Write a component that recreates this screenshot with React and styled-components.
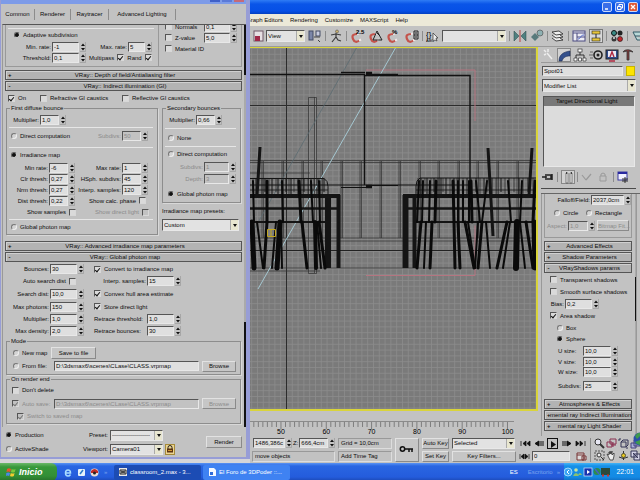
import styled, { createGlobalStyle, css } from 'styled-components';

const GlobalStyle = createGlobalStyle`
  * {
    box-sizing: border-box;
  }
  body {
    margin: 0;
    background: #c2c2c2;
  }
  body, button, input, select {
    font-family: 'Liberation Sans', sans-serif;
    font-size: 6px;
    line-height: 8px;
    color: #0c0c0c;
  }
`;

const sunken = css`
  border: 1px solid;
  border-color: #555 #e8e8e8 #e8e8e8 #555;
`;
const raised = css`
  border: 1px solid;
  border-color: #e2e2e2 #8a8a8a #8a8a8a #e2e2e2;
`;

/* shared controls */

const Line = styled.div`
  display: flex;
  align-items: center;
  flex: none;
  height: ${p => p.$h || 11}px;
  padding-left: ${p => p.$pl || 0}px;
  gap: ${p => p.$gap || 0}px;
  white-space: nowrap;
`;
const Rule = styled.hr`
  flex: none;
  height: 1px;
  margin: ${p => p.$mt || 0}px 4px 0 2px;
  border: 0;
  background: #e6e6e6;
`;
const PanelRule = styled.hr`
  flex: none;
  height: 1px;
  margin: 0 4px 0 0;
  border: 0;
  background: #4a4a4a;
`;
const Spring = styled.span`
  flex: 1;
`;
const TickLabel = styled.label`
  display: flex;
  flex: none;
  align-items: center;
  flex-direction: ${p => (p.$after ? 'row-reverse' : 'row')};
  gap: 3px;
  width: ${p => (p.$w ? p.$w + 'px' : 'auto')};
  white-space: nowrap;
  color: ${p => (p.$dim ? '#8b8b8b' : '#0c0c0c')};
`;
const CheckBox = styled.input`
  appearance: none;
  display: flex;
  justify-content: center;
  flex: none;
  width: 7px;
  height: 7px;
  margin: 0;
  border: 1px solid;
  border-color: #555 #d8d8d8 #d8d8d8 #555;
  background: ${p => (p.disabled ? '#c2c2c2' : '#dadada')};
  &:checked::after {
    content: '';
    width: 2px;
    height: 4px;
    border: solid ${p => (p.disabled ? '#777' : '#111')};
    border-width: 0 1px 1px 0;
    transform: rotate(40deg);
  }
`;
const RadioDot = styled.input`
  appearance: none;
  flex: none;
  width: 6px;
  height: 6px;
  margin: 0;
  border: 1px solid;
  border-color: #777 #eee #eee #777;
  border-radius: 50%;
  background: #d4d4d4;
  &:checked {
    background: #111;
    border-color: #666 #ccc #ccc #666;
  }
`;
const FieldLabel = styled.label`
  display: flex;
  flex: none;
  align-items: center;
  gap: 1px;
  white-space: nowrap;
  color: ${p => (p.$dim ? '#8b8b8b' : '#0c0c0c')};
`;
const Caption = styled.span`
  width: ${p => (p.$w ? p.$w + 'px' : 'auto')};
  text-align: ${p => p.$align || 'right'};
`;
const TextBox = styled.input`
  ${sunken}
  flex: ${p => (p.$w ? 'none' : '1')};
  width: ${p => (p.$w ? p.$w + 'px' : '0')};
  height: 10px;
  padding: 0 0 0 1px;
  border-radius: 0;
  background: ${p => (p.disabled ? '#c2c2c2' : '#dfdfdf')};
  color: ${p => (p.disabled ? '#8b8b8b' : '#0c0c0c')};
`;
const PushButton = styled.button`
  ${raised}
  flex: none;
  width: ${p => p.$w}px;
  height: ${p => p.$h || 11}px;
  padding: 0;
  background: #c6c6c6;
  text-align: center;
  white-space: nowrap;
  &:disabled {
    color: #8b8b8b;
  }
`;
const SelectFrame = styled.span`
  ${sunken}
  position: relative;
  display: flex;
  flex: none;
  width: ${p => (p.$w ? p.$w + 'px' : 'auto')};
  height: ${p => p.$h || 11}px;
  background: #e2e2e2;
`;
const SelectBox = styled.select`
  appearance: none;
  width: 100%;
  padding: 0 0 0 1px;
  border: 0;
  border-radius: 0;
  background: transparent;
`;
const DropArrow = styled.span`
  position: absolute;
  top: 0;
  right: 0;
  bottom: 0;
  width: 8px;
  display: grid;
  place-items: center;
  background: #e8e6d0;
  border-left: 1px solid #aaa;
  pointer-events: none;
  &::after {
    content: '';
    border: solid transparent;
    border-width: 3px 2px 0;
    border-top-color: #111;
  }
`;
const Group = styled.fieldset`
  min-width: 0;
  margin: 0;
  padding: 0 0 ${p => p.$pb || 0}px;
  border: 1px solid #8d8d8d;
  box-shadow: 1px 1px 0 #d8d8d8;
`;
const GroupTitle = styled.legend`
  height: 8px;
  margin-left: 3px;
  padding: 0 1px;
`;
const RolloutButton = styled.button`
  display: flex;
  align-items: center;
  flex: none;
  width: 100%;
  height: 10px;
  margin-bottom: 1px;
  padding: 0 2px;
  border: 1px solid #555;
  background: #b3b3b3;
  white-space: nowrap;
  box-shadow: inset 1px 1px 0 #d0d0d0;
`;
const RolloutSign = styled.span`
  width: 3px;
  font-weight: 700;
`;
const RolloutText = styled.span`
  flex: 1;
  text-align: center;
`;

const Spin = () => (
  <svg width="6" height="10" viewBox="0 0 6 10" aria-hidden="true">
    <path d="M5.500 0v9.500H0" fill="none" stroke="#999" strokeWidth=".7" />
    <path d="M1 4l2-2.600 2 2.600zM1 6l2 2.600L5 6z" fill="#111" />
  </svg>
);
const Num = ({ label, cap, value, w = 19, dim, align }) => (
  <FieldLabel $dim={dim}>
    <Caption $w={cap} $align={align}>{label}</Caption>
    <TextBox $w={w} defaultValue={value} disabled={dim} />
    <Spin />
  </FieldLabel>
);
const Check = ({ label, on, dim, after, w }) => (
  <TickLabel $dim={dim} $after={after} $w={w}>
    <CheckBox type="checkbox" defaultChecked={on} disabled={dim} />
    {label}
  </TickLabel>
);
const Radio = ({ label, on, name, w }) => (
  <TickLabel $w={w}>
    <RadioDot type="radio" name={name} defaultChecked={on} />
    {label}
  </TickLabel>
);
const Drop = ({ value, w, h, label }) => (
  <SelectFrame $w={w} $h={h}>
    <SelectBox aria-label={label}>
      <option>{value}</option>
    </SelectBox>
    <DropArrow />
  </SelectFrame>
);
const Rollout = ({ label, open }) => (
  <RolloutButton type="button">
    <RolloutSign>{open ? '-' : '+'}</RolloutSign>
    <RolloutText>{label}</RolloutText>
  </RolloutButton>
);

/* desktop frame */

const Desktop = styled.div`
  display: flex;
  flex-direction: column;
  min-height: 100vh;
`;
const Workspace = styled.div`
  position: relative;
  display: flex;
  flex: 1;
`;
const EdgeGlobe = styled.svg`
  position: absolute;
  right: 0;
  bottom: 17px;
`;

/* render dialog */

const DialogColumn = styled.aside`
  flex: none;
  width: 250px;
  padding-bottom: 3px;
  background: #d5d5d8;
`;
const Dialog = styled.div`
  display: flex;
  flex-direction: column;
  border: solid #979dd6;
  border-width: 0 4px 2px 1px;
  background: #c2c2c2;
`;
const DialogTitle = styled.div`
  display: flex;
  justify-content: flex-end;
  gap: 2px;
  height: 4px;
  padding-right: 2px;
  background: #7d9be8;
`;
const TitleStub = styled.button`
  width: 10px;
  height: 2px;
  padding: 0;
  border: 0;
  background: ${p => p.$color};
`;
const TabBar = styled.div`
  display: flex;
  align-items: center;
  height: 20px;
`;
const Tab = styled.button`
  height: 11px;
  padding: 0;
  width: ${p => p.$w}px;
  border: 0;
  border-right: 1px solid #8c8c8c;
  background: none;
`;
const ScrollArea = styled.div`
  display: flex;
  gap: 1px;
  height: 403px;
  margin-left: 1px;
  border-top: 1px solid #555;
  border-left: 1px solid #999;
`;
const ScrollBody = styled.div`
  flex: 1;
  min-width: 0;
  padding: 0 1px 0 2px;
  overflow: hidden;
`;
const ScrollTrack = styled.div`
  width: 2px;
  background: linear-gradient(#111 50px, #aaa 50px 297px, #111 297px);
`;
const Sampler = styled.div`
  display: flex;
  height: 42px;
  margin-bottom: 3px;
  border: solid #999;
  border-width: 0 1px 1px;
`;
const SamplerMain = styled.div`
  flex: 1;
  padding-top: 3px;
  border-right: 1px solid #999;
`;
const SamplerSide = styled.div`
  width: 82px;
  margin-top: -4px;
  padding-left: 6px;
`;
const Body = styled.div`
  display: ${p => (p.$row ? 'flex' : 'block')};
  align-items: flex-start;
  gap: 4px;
  margin: 0 1px ${p => p.$mb || 0}px;
`;
const FirstBounce = styled.div`
  flex: 1;
`;
const SecondBounce = styled.div`
  width: 79px;
`;
const PhotonRow = styled.div`
  display: grid;
  grid-template-columns: 86px 1fr;
  align-items: center;
  height: ${p => p.$h}px;
`;
const DialogFoot = styled.div`
  display: flex;
  align-items: center;
  height: 30px;
  padding-left: 5px;
`;
const FootColumn = styled.div`
  display: flex;
  flex-direction: column;
  width: ${p => p.$w}px;
`;
const LockButton = styled.button`
  display: grid;
  place-items: center;
  width: 10px;
  height: 11px;
  padding: 0;
  border: 1px solid #a58a3a;
  background: #ecd491;
`;

const RenderDialog = () => (
  <DialogColumn>
    <Dialog>
      <DialogTitle>
        <TitleStub type="button" aria-label="Minimize" $color="#3f60c8" />
        <TitleStub type="button" aria-label="Maximize" $color="#5b7ad8" />
        <TitleStub type="button" aria-label="Close" $color="#c46a78" />
      </DialogTitle>
      <TabBar>
        <Tab type="button" $w={34}>Common</Tab>
        <Tab type="button" $w={36}>Renderer</Tab>
        <Tab type="button" $w={38}>Raytracer</Tab>
        <Tab type="button" $w={67}>Advanced Lighting</Tab>
      </TabBar>
      <ScrollArea>
        <ScrollBody>
          <Sampler>
            <SamplerMain>
              <Rule />
              <Line $pl={8} $h={12}><Radio name="sampler" label="Adaptive subdivision" on /></Line>
              <Line $gap={13}>
                <Num label="Min. rate:" cap={45} value="-1" w={27} />
                <Num label="Max. rate:" cap={28} value="5" w={17} />
              </Line>
              <Line $gap={3}>
                <Num label="Threshold:" cap={45} value="0,1" w={27} />
                <Check label="Multipass" on after />
                <Check label="Rand" on after />
              </Line>
            </SamplerMain>
            <SamplerSide>
              <Line>
                <Check label="Normals" w={38} />
                <Num value="0,1" w={26} />
              </Line>
              <Line>
                <Check label="Z-value" w={38} />
                <Num value="5,0" w={26} />
              </Line>
              <Line><Check label="Material ID" /></Line>
            </SamplerSide>
          </Sampler>

          <Rollout label="VRay:: Depth of field/Antialiasing filter" />
          <Rollout label="VRay:: Indirect illumination (GI)" open />
          <Line $h={12} $pl={3}>
            <Check label="On" on w={32} />
            <Check label="Refractive GI caustics" w={82} />
            <Check label="Reflective GI caustics" />
          </Line>
          <Body $row $mb={6}>
            <FirstBounce>
              <Group>
                <GroupTitle>First diffuse bounce</GroupTitle>
                <Line $h={15}><Num label="Multiplier:" cap={32} value="1,0" /></Line>
                <Rule />
                <Line $h={15} $pl={4}>
                  <Radio name="first" label="Direct computation" w={76} />
                  <Num label="Subdivs:" cap={34} value="50" dim />
                </Line>
                <Rule $mt={4} />
                <Line $h={14} $pl={4}><Radio name="first" label="Irradiance map" on /></Line>
                <Line>
                  <Num label="Min rate:" cap={41} value="-6" />
                  <Num label="Max rate:" cap={46} value="1" />
                </Line>
                <Line>
                  <Num label="Clr thresh:" cap={41} value="0,27" />
                  <Num label="HSph. subdivs:" cap={46} value="45" />
                </Line>
                <Line>
                  <Num label="Nrm thresh:" cap={41} value="0,27" />
                  <Num label="Interp. samples:" cap={46} value="120" />
                </Line>
                <Line $gap={14}>
                  <Num label="Dist thresh:" cap={41} value="0,22" />
                  <Check label="Show calc. phase" after />
                </Line>
                <Line $h={12} $pl={16} $gap={19}>
                  <Check label="Show samples" after w={53} />
                  <Check label="Show direct light" after dim />
                </Line>
                <Rule $mt={1} />
                <Line $h={14} $pl={4}><Radio name="first" label="Global photon map" /></Line>
              </Group>
            </FirstBounce>
            <SecondBounce>
              <Group>
                <GroupTitle>Secondary bounces</GroupTitle>
                <Line $h={15}><Num label="Multiplier:" cap={32} value="0,66" /></Line>
                <Rule $mt={1} />
                <Line $h={17} $pl={5}><Radio name="second" label="None" /></Line>
                <Rule />
                <Line $h={14} $pl={5}><Radio name="second" label="Direct computation" /></Line>
                <Line><Num label="Subdivs:" cap={40} value="1" w={25} dim /></Line>
                <Line $h={13}><Num label="Depth:" cap={40} value="3" w={25} dim /></Line>
                <Line $h={17} $pl={5}><Radio name="second" label="Global photon map" on /></Line>
              </Group>
              <Line $h={16}>Irradiance map presets:</Line>
              <Drop label="Irradiance map presets" value="Custom" w={77} h={12} />
            </SecondBounce>
          </Body>

          <Rollout label="VRay:: Advanced irradiance map parameters" />
          <Rollout label="VRay:: Global photon map" open />
          <PhotonRow $h={12}>
            <Num label="Bounces:" cap={44} value="30" w={27} />
            <Line $pl={3}><Check label="Convert to irradiance map" on /></Line>
          </PhotonRow>
          <PhotonRow $h={12}>
            <Line $pl={16}><Check label="Auto search dist" after w={55} /></Line>
            <Num label="Interp. samples:" cap={55} value="15" w={27} />
          </PhotonRow>
          <PhotonRow $h={13}>
            <Num label="Search dist:" cap={44} value="10,0" w={27} />
            <Line $pl={3}><Check label="Convex hull area estimate" on /></Line>
          </PhotonRow>
          <PhotonRow $h={13}>
            <Num label="Max photons:" cap={44} value="150" w={27} />
            <Line $pl={3}><Check label="Store direct light" on /></Line>
          </PhotonRow>
          <PhotonRow $h={12}>
            <Num label="Multiplier:" cap={44} value="1,0" w={27} />
            <Line $pl={3}><Num label="Retrace threshold:" cap={52} value="1,0" w={27} align="left" /></Line>
          </PhotonRow>
          <PhotonRow $h={12}>
            <Num label="Max density:" cap={44} value="2,0" w={27} />
            <Line $pl={3}><Num label="Retrace bounces:" cap={52} value="30" w={27} align="left" /></Line>
          </PhotonRow>
          <Body>
            <Group $pb={2}>
              <GroupTitle>Mode</GroupTitle>
              <Line $h={15} $pl={6} $gap={3}>
                <Radio name="mode" label="New map" w={35} />
                <PushButton type="button" $w={45} $h={12}>Save to file</PushButton>
              </Line>
              <Line $h={12} $pl={6} $gap={3}>
                <Radio name="mode" label="From file:" w={38} />
                <TextBox aria-label="Photon map file" $w={145} defaultValue="D:\3dsmax6\scenes\CLase\CLASS.vrpmap" />
                <PushButton type="button" $w={34}>Browse</PushButton>
              </Line>
            </Group>
            <Group $pb={1}>
              <GroupTitle>On render end</GroupTitle>
              <Line $h={14} $pl={5}><Check label="Don't delete" /></Line>
              <Line $h={13} $pl={5} $gap={3}>
                <Check label="Auto save:" on dim w={39} />
                <TextBox aria-label="Auto save file" $w={145} defaultValue="D:\3dsmax6\scenes\CLase\CLASS.vrpmap" disabled />
                <PushButton type="button" $w={34} disabled>Browse</PushButton>
              </Line>
              <Line $h={12} $pl={10}><Check label="Switch to saved map" on dim /></Line>
            </Group>
          </Body>
        </ScrollBody>
        <ScrollTrack />
      </ScrollArea>
      <DialogFoot>
        <FootColumn $w={72}>
          <Line $h={14}><Radio name="target" label="Production" on /></Line>
          <Line $h={14}><Radio name="target" label="ActiveShade" /></Line>
        </FootColumn>
        <FootColumn $w={128}>
          <Line $h={14} $gap={2}>
            <Caption $w={30}>Preset:</Caption>
            <Drop label="Preset" value="-------------------" w={53} />
          </Line>
          <Line $h={14} $gap={2}>
            <Caption $w={30}>Viewport:</Caption>
            <Drop label="Viewport" value="Camera01" w={53} />
            <LockButton type="button" aria-label="Lock viewport">
              <svg width="6" height="8" viewBox="0 0 6 8">
                <path d="M1 4V2.500a2 2 0 0 1 4 0V4" fill="none" stroke="#222" />
                <rect y="3.500" width="6" height="4" fill="#5a3212" />
                <path d="M1 5.500h4" stroke="#d2942e" />
              </svg>
            </LockButton>
          </Line>
        </FootColumn>
        <PushButton type="button" $w={36} $h={12}>Render</PushButton>
      </DialogFoot>
    </Dialog>
  </DialogColumn>
);

/* main window */

const MaxWindow = styled.main`
  display: flex;
  flex-direction: column;
  flex: 1;
  min-width: 0;
  background: #c2c2c2;
`;
const TitleBar = styled.header`
  display: flex;
  align-items: center;
  justify-content: flex-end;
  gap: 3px;
  height: 14px;
  padding-right: 2px;
  background: linear-gradient(#2f7cf5, #0a55e8 4px, #0650e6 11px, #0340c0);
`;
const CaptionButton = styled.button`
  display: grid;
  place-items: center;
  width: 10px;
  height: 10px;
  padding: 0;
  border: 1px solid #c8d8fa;
  border-radius: 2px;
  background: ${p => p.$color};
`;
const MenuBar = styled.nav`
  display: flex;
  align-items: center;
  gap: 7px;
  height: 12px;
  overflow: hidden;
  background: #ece9d8;
`;
const MenuItem = styled.button`
  flex: none;
  padding: 0;
  border: 0;
  background: none;
  &:first-child {
    margin-left: -4px;
  }
`;
const Toolbar = styled.div`
  display: flex;
  align-items: center;
  gap: 3px;
  height: 21px;
  padding-left: 3px;
  overflow: hidden;
  border-bottom: 1px solid #9a9a9a;
`;
const ToolButton = styled.button`
  display: grid;
  place-items: center;
  flex: none;
  width: ${p => p.$w || 14}px;
  height: 14px;
  padding: 0;
  border: ${p => (p.$down ? '1px solid #888' : '0')};
  background: ${p => (p.$down ? '#d2d2d2' : 'none')};
`;
const Divider = styled.span`
  flex: none;
  width: 1px;
  height: ${p => p.$h || 10}px;
  background: #8c8c8c;
`;
const Middle = styled.div`
  display: flex;
  flex: 1;
`;
const SceneColumn = styled.div`
  display: flex;
  flex-direction: column;
  flex: 1;
  min-width: 0;
`;
const Viewport = styled.section`
  flex: 1;
  display: flex;
  height: 0;
  border: solid #d9d43a;
  border-width: 1px 2px 2px 0;
  background: #7b7b7b;
`;
const TimeRuler = styled.div`
  flex: none;
  height: 25px;
  overflow: hidden;
`;

const GLYPHS = {
  scale: (
    <>
      <rect x="1" y="2" width="9" height="10" fill="#e6dfe3" stroke="#705868" />
      <rect x="2" y="7" width="5" height="5" fill="#a02848" />
    </>
  ),
  pivot: (
    <>
      <rect x="1" y="2" width="4" height="9" fill="#7b86a8" stroke="#444c66" />
      <rect x="8" y="2" width="4" height="5" fill="#c8cce0" stroke="#444c66" />
      <path d="M6 8h6M10 11l2 2" stroke="#444" />
    </>
  ),
  manip: (
    <>
      <path d="M7 4v4M2 6l5-1 5 1M7 8l-4 5M7 8l2 3 3 1" fill="none" stroke="#3c3c3c" strokeWidth="1.200" />
      <circle cx="8" cy="2.500" r="1.500" fill="#c8b070" stroke="#444" strokeWidth=".5" />
    </>
  ),
  mirror: (
    <>
      <path d="M1 2l5 5-5 5zM13 2l-5 5 5 5z" fill="#508080" stroke="#2b4545" strokeWidth=".5" />
      <path d="M7 1v12" stroke="#b44" />
    </>
  ),
  align: (
    <>
      <path d="M1 8l4-4 4 4-4 4z" fill="#587a7c" />
      <circle cx="10" cy="4" r="3" fill="#8eb0b2" stroke="#444" strokeWidth=".6" />
    </>
  ),
  layers: <path d="M1 3l7-1 4 3-7 1zM1 6l4 3 7-1-3-2M1 9l4 3 7-1-3-2" fill="#eee" stroke="#222" strokeWidth=".8" />,
  curve: (
    <>
      <rect x="1" y="2" width="12" height="10" fill="#ececf4" stroke="#4a4a80" />
      <path d="M1 4h12M5 4v8M5 8h8" stroke="#4a4a80" />
      <path d="M6 10c3 0 2-4 6-4" fill="none" stroke="#5068c8" />
    </>
  ),
  schematic: (
    <>
      <rect x=".5" y=".5" width="13" height="13" fill="#d9d9d9" stroke="#777" />
      <rect x="3" y="2" width="8" height="3" fill="#e7c63c" stroke="#222" strokeWidth=".6" />
      <rect x="3" y="9" width="8" height="3" fill="#e7c63c" stroke="#222" strokeWidth=".6" />
      <path d="M7 5v4" stroke="#222" />
    </>
  ),
  material: (
    <>
      <circle cx="4" cy="4" r="2.500" fill="#3a8a84" stroke="#111" />
      <circle cx="10" cy="4" r="2.500" fill="#222" />
      <circle cx="4" cy="10" r="2.500" fill="#3a3a3a" />
      <circle cx="10" cy="10" r="2.500" fill="#c0282c" stroke="#111" strokeWidth=".6" />
      <circle cx="4" cy="9" r="1" fill="#ddd" />
    </>
  ),
  render: <path d="M2 3h10v4H4zM4 7l2 4h6" fill="#b8d8d8" stroke="#335a66" />,
  create: <path d="M3 2l2 2M7 1v3M3 7l2-1M6 5l5 6" stroke="#ededed" strokeWidth="1.500" />,
  modify: <path d="M1 12c0-6 4-9 11-10v5C7 7 5 9 4 12z" fill="#34508c" stroke="#1b2a50" strokeWidth=".6" />,
  hierarchy: (
    <>
      <path d="M7 4v3M3 10V7h8v3" fill="none" stroke="#333" />
      <rect x="5" y="1" width="4" height="3" fill="#fff" stroke="#333" strokeWidth=".7" />
      <path d="M1 10h3v3H1zM5.500 10h3v3h-3zM10 10h3v3h-3z" fill="#fff" stroke="#333" strokeWidth=".7" />
    </>
  ),
  motion: (
    <>
      <circle cx="9" cy="7" r="4" fill="none" stroke="#222" strokeWidth="1.600" />
      <circle cx="9" cy="7" r="1.500" fill="#222" />
      <path d="M1 4h3M0 7h4M1 10h3" stroke="#666" />
    </>
  ),
  display: (
    <>
      <rect x="1" y="2" width="12" height="9" fill="#2f4c8c" stroke="#222" />
      <rect x="3" y="3" width="8" height="6" fill="#e8e8f4" />
      <path d="M5 9l2-5 2 5M4 13h6" fill="none" stroke="#b02840" strokeWidth="1.400" />
    </>
  ),
  utility: <path d="M2 4c2-3 7-3 10 0l-4-1v9H6V3z" fill="#833a3a" stroke="#333" strokeWidth=".8" />,
  pin: <path d="M1 7h4M5 4v6M6 5h4v4H6M11 4v6" fill="none" stroke="#222" strokeWidth="1.500" />,
  result: (
    <>
      <path d="M4 2h2v10H4zM8 2h2v10H8z" fill="#eee" stroke="#555" strokeWidth=".7" />
      <path d="M4 2h1M9 2h1" stroke="#222" strokeWidth="1.500" />
    </>
  ),
  unique: <path d="M2 5l4 5M6 10l5-6" stroke="#9a9a9a" strokeWidth="1.200" />,
  trash: <path d="M5 6V4q2-2 4 0v2M4 6h6v5H4z" fill="none" stroke="#9a9a9a" />,
  config: (
    <>
      <rect x="2" y="2" width="9" height="8" fill="#f1f1ff" stroke="#3a3aa0" />
      <path d="M2 3h9" stroke="#2828a0" strokeWidth="2" />
      <path d="M6 9h6M6 11h6M9 7v6" stroke="#333" />
    </>
  ),
};
const Glyph = ({ name }) => (
  <svg width="14" height="14" viewBox="0 0 14 14" aria-hidden="true">{GLYPHS[name]}</svg>
);
const Magnet = ({ mark, shape }) => (
  <svg width="14" height="14" viewBox="0 0 14 14" aria-hidden="true">
    <path d="M6 5Q0 5 2 10T9 11" fill="none" stroke="#c4544c" strokeWidth="2.200" />
    <path d="M6 5l2-.5M8 11.500l2-1" stroke="#f0e8e8" strokeWidth="2.200" />
    {mark && <text x="5" y="5" fontSize="6" fontWeight="700">{mark}</text>}
    {shape && <path d={shape} fill="none" stroke="#222" />}
  </svg>
);
const Tool = ({ name, label, w, down, children }) => (
  <ToolButton type="button" aria-label={label || name} $w={w} $down={down}>
    {children || <Glyph name={name} />}
  </ToolButton>
);

const MainToolbar = () => (
  <Toolbar>
    <Tool name="scale" w={10} />
    <Drop label="Reference coordinate system" value="View" w={39} h={12} />
    <Tool name="pivot" />
    <Divider />
    <Tool name="manip" w={14} />
    <Divider />
    <Tool label="Snap" w={15}><Magnet mark="2.5" /></Tool>
    <Tool label="Angle snap" w={15}><Magnet shape="M4 11l4-9 5 9zM8 4l3 3" /></Tool>
    <Tool label="Percent snap" w={15}><Magnet mark="%" /></Tool>
    <Tool label="Spinner snap" w={15}><Magnet shape="M9 2h4v8H9zM9 6h4M11 3v2M11 7v2" /></Tool>
    <Divider />
    <Tool label="Named selections" w={13}>
      <svg width="14" height="14" viewBox="0 0 14 14">
        <text x="0" y="8" fontSize="8">{'{}'}</text>
        <text x="0" y="13" fontSize="4">ABC</text>
        <path d="M7 4l5 5-2 0 1 3-2-1-2 1z" fill="#eee" stroke="#333" strokeWidth=".7" />
      </svg>
    </Tool>
    <Drop label="Named selection set" value="" w={64} h={12} />
    <Divider />
    <Tool name="mirror" />
    <Tool name="align" />
    <Divider />
    <Tool name="layers" />
    <Divider />
    <Tool name="curve" />
    <Tool name="schematic" />
    <Divider />
    <Tool name="material" />
    <Divider />
    <Tool name="render" />
  </Toolbar>
);

/* wireframe scene */

const PANELS = [262, 282, 302, 321, 341, 360, 380, 399, 419, 438, 458, 477, 497, 517];
const LEFT_SLATS = [253, 256, 262, 265, 269, 272, 276, 278, 282, 286, 289, 291, 294, 298, 301, 304, 308, 311, 314, 318, 320, 324];
const RIGHT_SLATS = [418, 421, 425, 427, 431, 434, 438, 441, 443, 446, 450, 454, 457, 459, 463, 467, 471, 476, 480, 484, 487, 492, 496, 501, 505, 509, 514, 519, 523, 528, 533];
// seat backs above the seat line: [x top, x bottom, stroke width]
const CHAIR_BACKS = [
  [253, 254, 2], [267, 267, 3], [282, 283, 2], [299, 301, 3], [311, 313, 2], [319, 320, 2],
  [419, 417, 2], [423, 422, 2], [430, 429, 2], [436, 435, 3], [453, 454, 3], [458, 458, 2], [463, 463, 2],
  [469, 469, 2], [471, 472, 3], [476, 480, 2], [487, 482, 2], [508, 511, 2], [522, 520, 2], [535, 533, 3],
];
// legs below the seat line
const CHAIR_LEGS = [
  [252, 254, 5], [257, 263, 2], [267, 264, 3], [276, 272, 2], [280, 277, 5], [281, 282, 2],
  [302, 307, 3], [315, 316, 4], [317, 321, 2], [319, 325, 3],
  [421, 417, 3], [426, 424, 2], [432, 430, 3], [454, 455, 3], [458, 460, 3], [465, 474, 3],
  [468, 475, 2], [482, 478, 3], [478, 475, 2], [486, 490, 2], [507, 497, 3], [510, 503, 2],
  [517, 516, 6], [520, 525, 2], [526, 533, 3], [534, 535, 5],
];

const Scene = () => (
  <svg width="100%" height="100%" viewBox="250 48 286 361" preserveAspectRatio="xMidYMid slice" role="img" aria-label="Wireframe of a classroom">
    <defs>
      <pattern id="grid" x="286" y="48" width="5.800" height="5.800" patternUnits="userSpaceOnUse">
        <path d="M0 .5h5.800M.5 0v5.800" stroke="#8c8c8c" strokeWidth=".8" />
      </pattern>
    </defs>
    <rect x="0" y="0" width="1200" height="900" fill="#7a7a7a" />
    <rect x="0" y="0" width="1200" height="900" fill="url(#grid)" />
    <path d="M286.500 47v364M250 105.500h288" stroke="#2c2c2c" />
    <g fill="none" stroke="#303030" strokeWidth=".7">
      <path d="M250 160.500h288M250 162.500h288M250 173h60M250 238h288M250 241h288M250 268h288M250 271h70" />
      <path d="M308.500 97.500h8v176h-8zM314.500 97v176" />
      {PANELS.map(x => <path key={x} d={`M${x} 161v77M${x + 1.5} 161v77`} />)}
    </g>
    <path d="M250 250.500h288" stroke="#222" />
    <g fill="none" stroke="#b57480">
      <path d="M366 70h109v51M366 275.500h109v-50" />
    </g>
    <path d="M357 47L251 235" stroke="#5c6c72" strokeWidth=".8" />
    <path d="M396 47L258 289" stroke="#a5c8d2" />
    <g fill="none" stroke="#111">
      <path d="M250 74.500h115M364.500 75.500h105.500v109.500M364.500 75v110" strokeWidth="1.400" />
      <path d="M341 72.500h24M370 74.500h28" strokeWidth="1.400" />
      <path d="M250 185h220M341 187.500h30M370 185.500h28" />
      <path d="M366 73.500h6M366 186.500h6" strokeWidth="3.500" />
    </g>
    <g fill="none" stroke="#141414">
      <path d="M250 178.500h74q4 2 4 8v8M416 194v-8q0-6 4-8h118" />
      <path d="M250 196h90M403 196h135" strokeWidth="4" />
      <path d="M250 208.500h90M403 208.500h135" strokeWidth="2.500" />
      <path d="M250 222h75M416 222h122" strokeWidth="2" />
      <path d="M250 190h78M416 190h122" strokeWidth=".8" />
      <path d="M328 195v73M405.500 195v73" strokeWidth="6" />
      <path d="M338.500 195v73M414.500 195v73" strokeWidth="4" />
      <path d="M260 147l-3 49M488 148l5 88M532 148l-3 48" strokeWidth="3" />
      {[...LEFT_SLATS, ...RIGHT_SLATS].map((x, i) => (
        <path key={x} d={`M${x} 178v${14 + (i % 3) * 2}`} strokeWidth={i % 2 ? 1 : 0.6} />
      ))}
    </g>
    <g stroke="#0a0a0a" strokeLinecap="round">
      {CHAIR_BACKS.map(([x1, x2, w]) => (
        <path key={x1} d={`M${x1} 181L${x2} 222`} strokeWidth={w} />
      ))}
      {CHAIR_LEGS.map(([x1, x2, w]) => (
        <path key={x1} d={`M${x1} 222L${x2} 268`} strokeWidth={w} />
      ))}
    </g>
    <path d="M267.500 229.500h8v7h-8zM271 229v8" fill="none" stroke="#c3a822" />
  </svg>
);

const TICKS = Array.from({ length: 57 }, (_, i) => i);
const Ruler = () => (
  <TimeRuler>
    <svg width="288" height="25" viewBox="0 0 288 25">
      <path d="M0 10.500h264" stroke="#8a8a8a" />
      {TICKS.map(i => (
        <path key={i} d={`M${3.8 + i * 4.53} 11v${i % 10 === 6 ? 7 : 5}`} stroke="#6c6c6c" strokeWidth=".8" />
      ))}
      {[50, 60, 70, 80, 90, 100].map((n, i) => (
        <text key={n} x={31 + i * 45.3} y="23" fontSize="7" textAnchor="middle">{n}</text>
      ))}
    </svg>
  </TimeRuler>
);

/* command panel */

const CommandPanel = styled.aside`
  display: flex;
  flex-direction: column;
  flex: none;
  width: 102px;
  padding-left: 3px;
`;
const IconStrip = styled.div`
  display: flex;
  align-items: center;
  justify-content: space-between;
  height: 16px;
  margin-right: 5px;
  border-bottom: 1px solid #999;
`;
const NameRow = styled.div`
  display: flex;
  align-items: center;
  gap: 3px;
  height: 16px;
  margin: 0 5px 0 1px;
`;
const Swatch = styled.button`
  width: 9px;
  height: 10px;
  padding: 0;
  border: 1px solid #c8b400;
  background: #fde400;
`;
const ModifierRow = styled.div`
  display: flex;
  flex-direction: column;
  margin: 0 4px 4px 1px;
`;
const ModifierStack = styled.ul`
  ${sunken}
  height: 71px;
  margin: 0 5px 0 2px;
  padding: 0;
  list-style: none;
  background: #dcdcdc;
`;
const StackItem = styled.li`
  height: 9px;
  padding-left: 12px;
  background: #787878;
`;
const StackTools = styled.div`
  display: flex;
  align-items: center;
  justify-content: space-between;
  height: 20px;
  margin-right: 10px;
  margin-bottom: 1px;
`;
const PanelScroll = styled.div`
  display: flex;
  flex: 1;
  height: 0;
  margin-top: 4px;
  border-top: 1px solid #666;
  overflow: hidden;
`;
const PanelBody = styled.div`
  flex: 1;
  min-width: 0;
  padding: 0 3px 0 2px;
  border-left: 1px solid #999;
`;
const PanelTrack = styled.div`
  width: 2px;
  margin-right: 3px;
  background: linear-gradient(#aaa 83px, #111 83px 127px, #aaa 127px);
  border-right: 1px solid #999;
`;
const LightBox = styled.div`
  height: 44px;
  margin-bottom: 3px;
  border: solid #999;
  border-width: 0 1px 1px;
`;
const ShadowBox = styled.div`
  margin-bottom: 4px;
`;

const SidePanel = () => (
  <CommandPanel>
    <IconStrip>
      <Tool name="create" />
      <Tool name="modify" down />
      <Tool name="hierarchy" />
      <Tool name="motion" />
      <Tool name="display" />
      <Tool name="utility" />
    </IconStrip>
    <NameRow>
      <TextBox aria-label="Object name" defaultValue="Spot01" />
      <Swatch type="button" aria-label="Object color" />
    </NameRow>
    <ModifierRow>
      <Drop label="Modifier List" value="Modifier List" h={13} />
    </ModifierRow>
    <ModifierStack>
      <StackItem>Target Directional Light</StackItem>
    </ModifierStack>
    <StackTools>
      <Tool name="pin" />
      <Divider />
      <Tool name="result" down />
      <Divider />
      <Tool name="unique" />
      <Tool name="trash" />
      <Divider />
      <Tool name="config" />
    </StackTools>
    <PanelRule />
    <PanelScroll>
      <PanelBody>
        <LightBox>
          <Line $h={12}><Num label="Falloff/Field:" cap={45} value="2037,0cm" w={33} /></Line>
          <Line $h={13} $pl={9} $gap={3}>
            <Radio name="cone" label="Circle" w={29} />
            <Radio name="cone" label="Rectangle" />
          </Line>
          <Line $h={13} $gap={2}>
            <Num label="Aspect:" cap={22} value="1,0" w={20} dim />
            <PushButton type="button" $w={32} disabled>Bitmap Fit...</PushButton>
          </Line>
        </LightBox>
        <Rollout label="Advanced Effects" />
        <Rollout label="Shadow Parameters" />
        <Rollout label="VRayShadows params" open />
        <ShadowBox>
          <Line $pl={6}><Check label="Transparent shadows" /></Line>
          <Line $h={13} $pl={6}><Check label="Smooth surface shadows" /></Line>
          <Line><Num label="Bias:" cap={20} value="0,2" w={27} /></Line>
          <Line $h={13} $pl={6}><Check label="Area shadow" on /></Line>
          <Line $pl={13}><Radio name="area" label="Box" /></Line>
          <Line $pl={13}><Radio name="area" label="Sphere" on /></Line>
          <Line $h={13} $pl={14}><Num label="U size:" cap={24} value="10,0" w={28} align="left" /></Line>
          <Line $h={10} $pl={14}><Num label="V size:" cap={24} value="10,0" w={28} align="left" /></Line>
          <Line $h={10} $pl={14}><Num label="W size:" cap={24} value="10,0" w={28} align="left" /></Line>
          <Line $h={18} $pl={14}><Num label="Subdivs:" cap={24} value="25" w={28} align="left" /></Line>
        </ShadowBox>
        <Rollout label="Atmospheres & Effects" />
        <Rollout label="mental ray Indirect Illumination" />
        <Rollout label="mental ray Light Shader" />
      </PanelBody>
      <PanelTrack />
    </PanelScroll>
  </CommandPanel>
);

/* status bar */

const StatusBar = styled.footer`
  display: flex;
  align-items: center;
  gap: 3px;
  height: 27px;
  padding: 0 2px;
  overflow: hidden;
  white-space: nowrap;
`;
const StatusColumn = styled.div`
  display: flex;
  flex-direction: column;
  flex: none;
  gap: 2px;
  width: ${p => p.$w}px;
`;
const StatusCell = styled.div`
  ${sunken}
  flex: none;
  display: flex;
  align-items: center;
  height: 11px;
  padding-left: 2px;
  border-color: #999 #ddd #ddd #999;
`;
const ButtonGrid = styled.div`
  display: grid;
  grid-template-columns: repeat(${p => p.$cols}, 1fr);
  gap: 1px;
  flex: ${p => (p.$grow ? '1' : 'none')};
  align-items: center;
  justify-items: center;
`;
const MiniButton = styled.button`
  display: grid;
  place-items: center;
  width: 11px;
  height: 11px;
  padding: 0;
  border: ${p => (p.$framed ? '1px solid #111' : '0')};
  background: none;
`;

const MINI = {
  'Go to start': <path d="M1 3v5M6 3v5L3 5.500zM10 3v5L7 5.500z" fill="#111" stroke="#111" strokeWidth=".8" />,
  'Previous frame': <path d="M5 3v5L1 5.500zM7 3v5M9 3v5" fill="#111" stroke="#111" />,
  Play: <path d="M3 2v7l5-3.500z" fill="#111" />,
  'Next frame': <path d="M6 3v5l4-2.500zM2 3v5M4 3v5" fill="#111" stroke="#111" />,
  'Go to end': <path d="M10 3v5M5 3v5l3-2.500zM1 3v5l3-2.500z" fill="#111" stroke="#111" strokeWidth=".8" />,
  'Key mode': <path d="M1 3v5M10 3v5M5 3v5L2 5.500zM6 3v5l3-2.500z" fill="#111" stroke="#111" strokeWidth=".7" />,
  'Time configuration': <path d="M1 2h7v7H1zM1 4h7M6 5h4v4H6zM8 6v2" fill="#ddd" stroke="#733" />,
  Zoom: <><circle cx="4" cy="4" r="3" fill="#e8e8f4" stroke="#333" /><path d="M6 6l4 4" stroke="#333" strokeWidth="2" /></>,
  'Zoom all': <path d="M4 1h6v5H4zM1 4h5v5H1zM7 4v5M5 7h5" fill="none" stroke="#8a3050" />,
  Extents: <path d="M3 4h5v5H3zM3 4l2-2h5v5L8 9M1 1h2M1 1v2M10 10H8" fill="none" stroke="#335" />,
  'Extents all': <path d="M4 2h6v6H4zM1 5h5v5H1z" fill="#aab0d8" stroke="#44407c" />,
  Region: <><rect x="1" y="1" width="9" height="9" fill="none" stroke="#555" strokeDasharray="2 1" /><circle cx="5" cy="5" r="2" fill="#eee" stroke="#333" /><path d="M7 7l3 3" stroke="#333" /></>,
  Pan: <path d="M2 6L1 4l2 1V2l1 2V1l1 3 1-3v4l2-2v3L7 10H4z" fill="#eee" stroke="#333" strokeWidth=".8" />,
  'Arc rotate': <><path d="M5.500 1v9M1 7q4 3 9 0" fill="none" stroke="#333" /><circle cx="5.500" cy="5.500" r="2" fill="#e8c820" stroke="#553" /></>,
  'Min/Max': <path d="M1 1h6v6H1zM4 4h6v6H4zM3 3l5 5" fill="#d4d4e8" stroke="#335" />,
};
const Mini = ({ name, framed }) => (
  <MiniButton type="button" aria-label={name} $framed={framed}>
    <svg width="11" height="11" viewBox="0 0 11 11">{MINI[name]}</svg>
  </MiniButton>
);

const Status = () => (
  <StatusBar>
    <StatusColumn $w={83}>
      <Line $gap={1}>
        <Num value="1486,386c" w={32} />
        <Num label="Z:" value="666,4cm" w={29} />
      </Line>
      <StatusCell>move objects</StatusCell>
    </StatusColumn>
    <StatusColumn $w={54}>
      <StatusCell>Grid = 10,0cm</StatusCell>
      <StatusCell>Add Time Tag</StatusCell>
    </StatusColumn>
    <PushButton type="button" aria-label="Set keys" $w={24} $h={24}>
      <svg width="16" height="8" viewBox="0 0 16 8">
        <circle cx="3.500" cy="4" r="2.200" fill="none" stroke="#111" strokeWidth="1.500" />
        <path d="M6 4h8M10 4v3M13 4v3" fill="none" stroke="#111" strokeWidth="1.500" />
      </svg>
    </PushButton>
    <StatusColumn $w={27}>
      <PushButton type="button" $w={27}>Auto Key</PushButton>
      <PushButton type="button" $w={27}>Set Key</PushButton>
    </StatusColumn>
    <StatusColumn $w={64}>
      <Drop label="Key selection" value="Selected" w={63} />
      <PushButton type="button" $w={64}>Key Filters...</PushButton>
    </StatusColumn>
    <StatusColumn $w={68}>
      <ButtonGrid $cols={5}>
        <Mini name="Go to start" />
        <Mini name="Previous frame" />
        <Mini name="Play" framed />
        <Mini name="Next frame" />
        <Mini name="Go to end" />
      </ButtonGrid>
      <Line $gap={2}>
        <Mini name="Key mode" />
        <TextBox aria-label="Current frame" $w={38} defaultValue="0" />
        <Spring />
        <Mini name="Time configuration" />
      </Line>
    </StatusColumn>
    <Divider $h={24} />
    <ButtonGrid $cols={4} $grow>
      <Mini name="Zoom" />
      <Mini name="Zoom all" />
      <Mini name="Extents" />
      <Mini name="Extents all" />
      <Mini name="Region" />
      <Mini name="Pan" />
      <Mini name="Arc rotate" />
      <Mini name="Min/Max" />
    </ButtonGrid>
  </StatusBar>
);

/* windows taskbar */

const TaskBar = styled.footer`
  display: flex;
  align-items: center;
  height: 18px;
  color: #fff;
  background: linear-gradient(#5a94f4, #2a66e2 3px, #245cdc 14px, #1c48b4);
`;
const StartButton = styled.button`
  display: flex;
  align-items: center;
  gap: 3px;
  width: 57px;
  height: 18px;
  padding: 0 0 0 6px;
  border: 0;
  border-radius: 0 6px 6px 0;
  background: linear-gradient(#6cb86a, #37983a 4px, #338f36 13px, #276f2a);
  color: #fff;
  font-size: 9px;
  font-weight: 700;
  font-style: italic;
`;
const QuickLaunch = styled.div`
  display: flex;
  align-items: center;
  gap: 5px;
  width: 57px;
  padding-left: 7px;
`;
const TaskButton = styled.button`
  display: flex;
  align-items: center;
  gap: 3px;
  width: 87px;
  height: 15px;
  margin-right: 2px;
  padding: 0 0 0 5px;
  border: 0;
  border-radius: 2px;
  background: ${p => (p.$active ? '#1c4cb4' : '#3f82f2')};
  color: #fff;
  white-space: nowrap;
`;
const TrayText = styled.span`
  margin-right: ${p => p.$mr || 0}px;
  color: ${p => (p.$dim ? '#7ba2ee' : '#fff')};
`;
const Tray = styled.div`
  display: flex;
  align-items: center;
  gap: 2px;
  width: 76px;
  height: 18px;
  padding-right: 6px;
  background: linear-gradient(#45b4f6, #1690e8 3px, #148ae4 14px, #0f6cc0);
`;
const Clock = styled.time`
  margin-left: auto;
  font-size: 7px;
`;

const Taskbar = () => (
  <TaskBar>
    <StartButton type="button">
      <svg width="10" height="10" viewBox="0 0 10 10">
        <path d="M1 2q2-1.500 4 0L4.200 5q-2-1-3.700 0z" fill="#e8542c" />
        <path d="M5.600 2q2 1 4 0L8.800 5q-2 1-3.800 0z" fill="#7cc83c" />
        <path d="M.3 6q2-1 3.700 0L3.200 9q-2-1.200-3.200 0z" fill="#4a88ec" />
        <path d="M4.800 6q2 1 3.800 0L7.800 9q-2 1-3.800 0z" fill="#f4cc30" />
      </svg>
      Inicio
    </StartButton>
    <QuickLaunch>
      <svg width="8" height="9" viewBox="0 0 8 9">
        <path d="M1.500 5h5Q6.500 2 4 2T1.500 5t2.500 3q1.500 0 2.500-1.500" fill="none" stroke="#a8dcff" strokeWidth="1.500" />
      </svg>
      <svg width="8" height="9" viewBox="0 0 8 9">
        <rect x="1" y="1" width="7" height="7" rx="1" fill="#e6f2fa" />
        <path d="M3 6l3-4" stroke="#2e7bc8" strokeWidth="1.500" />
      </svg>
      <svg width="9" height="9" viewBox="0 0 9 9">
        <circle cx="4.500" cy="4.500" r="4" fill="#e9dcd4" />
        <path d="M1 3q3.500-4 7 0v2H1z" fill="#c02c28" />
        <circle cx="4.500" cy="5" r="1.500" fill="#222" />
      </svg>
      <TrayText $dim>»</TrayText>
    </QuickLaunch>
    <TaskButton type="button" $active>
      <svg width="8" height="8" viewBox="0 0 8 8">
        <rect width="8" height="8" fill="#e8e8e8" />
        <path d="M1 2h6v4H1zM2 3l4 2M6 3L2 5" fill="none" stroke="#222" />
      </svg>
      classroom_2.max - 3...
    </TaskButton>
    <TaskButton type="button">
      <svg width="8" height="8" viewBox="0 0 8 8">
        <path d="M1 0h5l2 2v6H1z" fill="#f4f8ff" />
        <path d="M2 4h3v3H2z" fill="#2f6cd8" />
      </svg>
      El Foro de 3DPoder ::...
    </TaskButton>
    <Spring />
    <TrayText $mr={10}>ES</TrayText>
    <TrayText $dim $mr={4}>Escritorio</TrayText>
    <TrayText $dim $mr={4}>»</TrayText>
    <Tray>
      <svg width="46" height="12" viewBox="0 0 46 12">
        <circle cx="4" cy="6" r="4" fill="#3aa6f4" stroke="#bfe4fc" strokeWidth=".8" />
        <path d="M5 4L3 6l2 2" fill="none" stroke="#fff" />
        <circle cx="12" cy="4" r="1.800" fill="#c8e4a0" />
        <path d="M9 10q3-6 6 0zM14 9q2-4 4 0z" fill="#8ac070" />
        <rect x="20" y="2" width="8" height="8" fill="#1634b0" stroke="#dce8ff" strokeWidth=".7" />
        <path d="M23 4v4l3-2z" fill="#fff" />
        <circle cx="33" cy="5.500" r="3.500" fill="#2e8c4c" />
        <path d="M31 3l4 5" stroke="#4560c8" strokeWidth="1.500" />
        <rect x="37" y="2" width="9" height="7" fill="#2a4a3c" />
        <path d="M38 9.500h2M43 9.500h2" stroke="#c33" strokeWidth="2" />
      </svg>
      <Clock>22:01</Clock>
    </Tray>
  </TaskBar>
);

const App = () => (
  <>
    <GlobalStyle />
    <Desktop>
      <Workspace>
        <RenderDialog />
        <MaxWindow>
          <TitleBar>
            <CaptionButton type="button" aria-label="Minimize" $color="#3a6ee8">
              <svg width="6" height="6"><path d="M1 5h3" stroke="#fff" strokeWidth="1.500" /></svg>
            </CaptionButton>
            <CaptionButton type="button" aria-label="Restore" $color="#3a6ee8">
              <svg width="6" height="6"><path d="M2 2V.5h3.500V4H4M.5 2.500H4v3H.5z" fill="none" stroke="#fff" /></svg>
            </CaptionButton>
            <CaptionButton type="button" aria-label="Close" $color="#dd5a38">
              <svg width="6" height="6"><path d="M1 1l4 4M5 1L1 5" stroke="#fff" strokeWidth="1.300" /></svg>
            </CaptionButton>
          </TitleBar>
          <MenuBar>
            {['Graph Editors', 'Rendering', 'Customize', 'MAXScript', 'Help'].map(item => (
              <MenuItem key={item} type="button">{item}</MenuItem>
            ))}
          </MenuBar>
          <MainToolbar />
          <Middle>
            <SceneColumn>
              <Viewport><Scene /></Viewport>
              <Ruler />
            </SceneColumn>
            <SidePanel />
          </Middle>
          <Status />
        </MaxWindow>
        <EdgeGlobe width="7" height="14" viewBox="0 0 7 14" aria-hidden="true">
          <circle cx="7" cy="7" r="6.500" fill="#2b50a8" />
          <path d="M2 4q3-4 5-3v3L4 7zM2 10l5-2v5q-3 0-5-3z" fill="#3f9a4c" />
        </EdgeGlobe>
      </Workspace>
      <Taskbar />
    </Desktop>
  </>
);

export default App;
